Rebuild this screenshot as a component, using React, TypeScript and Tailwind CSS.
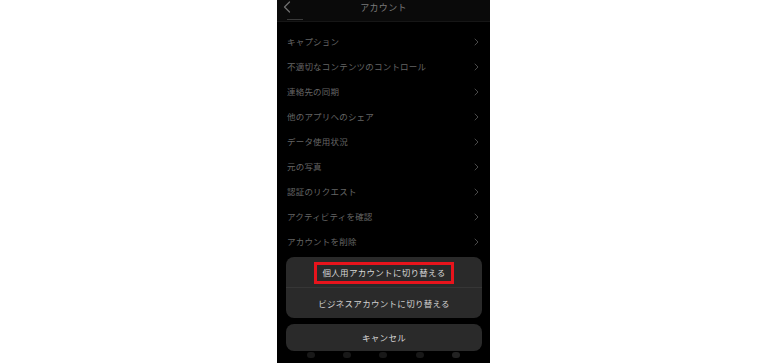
import React from "react";

const rows = [
  "キャプション",
  "不適切なコンテンツのコントロール",
  "連絡先の同期",
  "他のアプリへのシェア",
  "データ使用状況",
  "元の写真",
  "認証のリクエスト",
  "アクティビティを確認",
  "アカウントを削除",
];

function Chevron({ className }: { className?: string }) {
  return (
    <svg width="5" height="8" viewBox="0 0 5 8" className={className}>
      <path d="M1 1 L4 4 L1 7" fill="none" stroke="currentColor" strokeWidth="1" strokeLinecap="round" strokeLinejoin="round" />
    </svg>
  );
}

export default function App() {
  return (
    <div
      className="w-[768px] h-[363px] bg-white overflow-hidden"
      style={{ fontFamily: '"Noto Sans CJK JP", "Noto Sans", sans-serif' }}
    >
      <div className="ml-[277px] w-[213px] h-[363px] bg-black relative overflow-hidden">
        {/* header */}
        <div className="h-[22px] bg-[#0a0a0a] border-b border-[#161616] relative flex justify-center">
          <svg width="8" height="12" viewBox="0 0 8 12" className="absolute left-[6px] top-[1px] text-[#6e6e6e]">
            <path d="M6.5 1 L1.5 6 L6.5 11" fill="none" stroke="currentColor" strokeWidth="1.3" strokeLinecap="round" strokeLinejoin="round" />
          </svg>
          <span className="text-[9px] leading-[16px] text-[#7a7a7a] tracking-[0.3px]">アカウント</span>
          <div className="absolute left-[10px] top-[19px] w-[16px] h-[1px] bg-[#3a3a3a]" />
        </div>
        {/* list */}
        <div className="pt-[7px] pl-[10px] pr-[11px]">
          {rows.map((r) => (
            <div key={r} className="h-[25px] flex items-center justify-between">
              <span className="text-[8.5px] text-[#656565] tracking-[0.2px]">{r}</span>
              <Chevron className="text-[#4a4a4a]" />
            </div>
          ))}
        </div>
        {/* tab bar remnants */}
        <div className="absolute left-0 right-0 top-[352px] flex justify-around px-[16px]">
          <div className="w-[8px] h-[6px] rounded-full bg-[#181818]" />
          <div className="w-[8px] h-[6px] rounded-full bg-[#181818]" />
          <div className="w-[8px] h-[6px] rounded-full bg-[#181818]" />
          <div className="w-[8px] h-[6px] rounded-full bg-[#181818]" />
          <div className="w-[8px] h-[6px] rounded-full bg-[#222222]" />
        </div>
        {/* action sheet */}
        <div className="absolute left-[9px] right-[8px] top-[257px] flex flex-col gap-[6px]">
          <div className="rounded-[8px] bg-[#2a2a2a] flex flex-col relative">
            <div className="h-[30px] flex items-center justify-center">
              <span className="text-[8.5px] text-[#d6d6d6] tracking-[0.3px]">個人用アカウントに切り替える</span>
            </div>
            <div className="h-[1px] bg-[#363636]" />
            <div className="h-[30px] flex items-center justify-center">
              <span className="text-[8.5px] text-[#d0d0d0] tracking-[0.3px]">ビジネスアカウントに切り替える</span>
            </div>
            <div className="absolute left-[28px] top-[5px] w-[140px] h-[22px] border-[3.5px] border-[#e8141c]" />
          </div>
          <div className="rounded-[8px] bg-[#2a2a2a] h-[27px] flex items-center justify-center">
            <span className="text-[8.5px] text-[#d6d6d6] tracking-[0.3px]">キャンセル</span>
          </div>
        </div>
      </div>
    </div>
  );
}
